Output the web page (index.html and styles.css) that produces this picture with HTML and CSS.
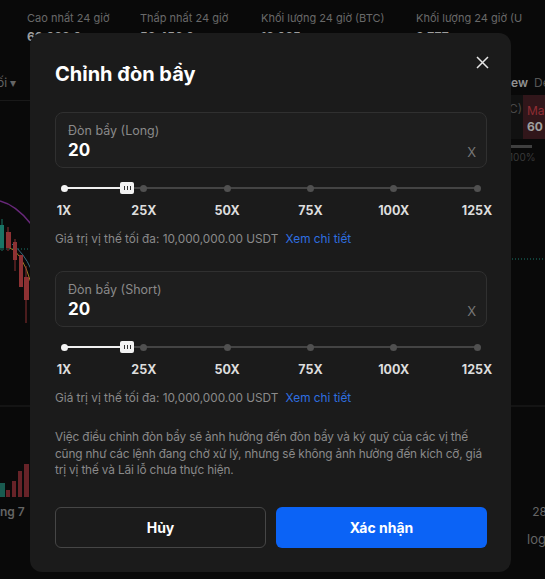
FILE: index.html
```html
<!DOCTYPE html>
<html lang="vi">
<head>
  <meta charset="UTF-8" />
  <meta name="viewport" content="width=device-width, initial-scale=1.0"/>
  <title>Chỉnh đòn bẩy</title>
  <link rel="stylesheet" href="styles.css">
</head>
<body>
  <!-- Trang giao dịch phía sau -->
  <div class="page">
    <div class="stats">
      <div class="stat"><span class="stat-label">Cao nhất 24 giờ</span><span class="stat-value">60,088.0</span></div>
      <div class="stat"><span class="stat-label">Thấp nhất 24 giờ</span><span class="stat-value">58,456.0</span></div>
      <div class="stat"><span class="stat-label">Khối lượng 24 giờ (BTC)</span><span class="stat-value">13,025</span></div>
      <div class="stat"><span class="stat-label">Khối lượng 24 giờ (U</span><span class="stat-value">8,777</span></div>
    </div>

    <div class="toolbar">
      <span class="tool-left">ối &#9662;</span>
      <span class="tool-right">ew <span class="dim">De</span></span>
    </div>

    <div class="chart">
      <svg class="chart-svg" width="545" height="399" viewBox="0 0 545 399">
        <line x1="0" y1="305" x2="545" y2="305" stroke="#262626" />
        <line x1="0" y1="148" x2="32" y2="148" stroke="#1f8f80" stroke-dasharray="1 2" />
        <line x1="500" y1="158" x2="545" y2="158" stroke="#1f8f80" stroke-dasharray="1 2" />
        <path d="M0 100 Q16 104 31 123" stroke="#7a2f8f" stroke-width="1.5" fill="none" />
        <path d="M8 146 Q22 150 31 182" stroke="#b8902a" stroke-width="1" fill="none" />
        <path d="M12 143 Q24 152 31 168" stroke="#3f7f97" stroke-width="1" fill="none" />
        <!-- nến -->
        <line x1="2" y1="118" x2="2" y2="150" stroke="#1e8a78" />
        <rect x="0" y="124" width="4" height="23" fill="#1e8a78" />
        <line x1="8" y1="126" x2="8" y2="150" stroke="#a63a3c" />
        <rect x="6" y="131" width="5" height="16" fill="#a63a3c" />
        <line x1="15" y1="138" x2="15" y2="170" stroke="#a63a3c" />
        <rect x="13" y="141" width="4" height="18" fill="#a63a3c" />
        <rect x="19" y="154" width="4" height="32" fill="#a63a3c" />
        <line x1="26" y1="165" x2="26" y2="222" stroke="#a63a3c" />
        <rect x="24" y="176" width="5" height="23" fill="#a63a3c" />
        <rect x="30" y="186" width="2" height="13" fill="#2a7f8f" />
        <!-- khối lượng -->
        <rect x="0" y="382" width="5" height="14" fill="#1e6b5e" />
        <rect x="6" y="389" width="4" height="7" fill="#7a2a30" />
        <rect x="12" y="380" width="4" height="16" fill="#7a2a30" />
        <rect x="18" y="370" width="4" height="26" fill="#7a2a30" />
        <rect x="24" y="363" width="5" height="33" fill="#7a2a30" />
        <rect x="30" y="370" width="2" height="26" fill="#7a2a30" />
      </svg>

      <div class="quick-trade">
        <div class="qt-row">
          <span class="qt-box">C)</span>
          <span class="qt-sell"><span class="qt-name">Ma</span><span class="qt-price">60</span></span>
        </div>
        <div class="qt-bar"></div>
        <span class="qt-pct">100%</span>
      </div>
    </div>

    <div class="axis">
      <span>ng 7</span>
      <span>28</span>
    </div>
    <div class="axis-bottom">log</div>
  </div>

  <div class="mask"></div>

  <!-- Hộp thoại -->
  <div class="modal">
    <div class="modal-head">
      <h2 class="modal-title">Chỉnh đòn bẩy</h2>
      <button class="close-btn" aria-label="Đóng">
        <svg width="13" height="13" viewBox="0 0 13 13"><path d="M1 1L12 12M12 1L1 12" stroke="#e6e6e6" stroke-width="1.5" fill="none"/></svg>
      </button>
    </div>

    <div class="field">
      <span class="field-label">Đòn bẩy (Long)</span>
      <div class="field-row">
        <span class="field-value">20</span>
        <span class="field-unit">X</span>
      </div>
    </div>

    <div class="slider">
      <div class="track"></div>
      <div class="track-fill" style="width: 15.3%"></div>
      <span class="tick active" style="left: 0%"></span>
      <span class="tick" style="left: 19.35%"></span>
      <span class="tick" style="left: 39.52%"></span>
      <span class="tick" style="left: 59.68%"></span>
      <span class="tick" style="left: 79.84%"></span>
      <span class="tick" style="left: 100%"></span>
      <span class="thumb" style="left: 15.3%"><i></i><i></i><i></i></span>
    </div>
    <div class="marks">
      <span style="left: 0%">1X</span>
      <span style="left: 19.35%">25X</span>
      <span style="left: 39.52%">50X</span>
      <span style="left: 59.68%">75X</span>
      <span style="left: 79.84%">100X</span>
      <span style="left: 100%">125X</span>
    </div>
    <p class="info">Giá trị vị thế tối đa: 10,000,000.00 USDT <a href="#" class="link">Xem chi tiết</a></p>

    <div class="field">
      <span class="field-label">Đòn bẩy (Short)</span>
      <div class="field-row">
        <span class="field-value">20</span>
        <span class="field-unit">X</span>
      </div>
    </div>

    <div class="slider">
      <div class="track"></div>
      <div class="track-fill" style="width: 15.3%"></div>
      <span class="tick active" style="left: 0%"></span>
      <span class="tick" style="left: 19.35%"></span>
      <span class="tick" style="left: 39.52%"></span>
      <span class="tick" style="left: 59.68%"></span>
      <span class="tick" style="left: 79.84%"></span>
      <span class="tick" style="left: 100%"></span>
      <span class="thumb" style="left: 15.3%"><i></i><i></i><i></i></span>
    </div>
    <div class="marks">
      <span style="left: 0%">1X</span>
      <span style="left: 19.35%">25X</span>
      <span style="left: 39.52%">50X</span>
      <span style="left: 59.68%">75X</span>
      <span style="left: 79.84%">100X</span>
      <span style="left: 100%">125X</span>
    </div>
    <p class="info">Giá trị vị thế tối đa: 10,000,000.00 USDT <a href="#" class="link">Xem chi tiết</a></p>

    <p class="note">Việc điều chỉnh đòn bẩy sẽ ảnh hưởng đến đòn bẩy và ký quỹ của các vị thế cũng như các lệnh đang chờ xử lý, nhưng sẽ không ảnh hưởng đến kích cỡ, giá trị vị thế và Lãi lỗ chưa thực hiện.</p>

    <div class="actions">
      <button class="btn btn-cancel">Hủy</button>
      <button class="btn btn-ok">Xác nhận</button>
    </div>
  </div>
</body>
</html>
```

FILE: styles.css
```css
  * {
    box-sizing: border-box;
  }

  body {
    margin: 0;
    width: 545px;
    height: 579px;
    overflow: hidden;
    background-color: #0b0b0b;
    font-family: Inter, "Noto Sans", sans-serif;
    position: relative;
  }

  /* page behind */
  .page {
    width: 545px;
    height: 579px;
    overflow: hidden;
  }

  .stats {
    display: grid;
    grid-template-columns: 113px 121px 155px 140px;
    padding-left: 27px;
    height: 58px;
    padding-top: 11px;
    white-space: nowrap;
  }

  .stat {
    display: flex;
    flex-direction: column;
    gap: 4px;
    overflow: hidden;
  }

  .stat-label {
    font-size: 11px;
    color: #7c7c7c;
  }

  .stat-value {
    font-size: 12px;
    font-weight: 700;
    color: #bbb;
  }

  .toolbar {
    display: flex;
    align-items: center;
    height: 43px;
    padding-top: 6px;
    border-bottom: 1px solid #1e1e1e;
    font-size: 12px;
    color: #777;
    white-space: nowrap;
  }

  .tool-left {
    margin-left: -3px;
  }

  .tool-right {
    margin-left: auto;
    width: 34px;
    overflow: hidden;
    color: #aaa;
    font-weight: 600;
  }

  .tool-right .dim {
    color: #666;
    font-weight: 400;
    margin-left: 3px;
  }

  .chart {
    position: relative;
    height: 399px;
  }

  .chart-svg {
    display: block;
  }

  .quick-trade {
    position: absolute;
    top: -6px;
    left: 509px;
    width: 36px;
    overflow: hidden;
  }

  .qt-row {
    display: flex;
    height: 44px;
  }

  .qt-box {
    width: 14px;
    background: #141414;
    color: #555;
    font-size: 12px;
    padding-top: 6px;
  }

  .qt-sell {
    flex: 1;
    background: #3a1b1f;
    display: flex;
    flex-direction: column;
    padding: 8px 0 0 4px;
    font-size: 12px;
    line-height: 16px;
  }

  .qt-name {
    color: #a8343c;
  }

  .qt-price {
    color: #bbb;
    font-weight: 700;
  }

  .qt-bar {
    width: 21px;
    height: 3px;
    background: #4a4a4a;
    margin-top: 6px;
    margin-left: 2px;
  }

  .qt-pct {
    display: block;
    font-size: 10px;
    color: #444;
    margin-top: 3px;
  }

  .axis {
    display: flex;
    justify-content: space-between;
    height: 24px;
    padding-top: 4px;
    font-size: 12px;
    color: #777;
    margin-right: -2px;
  }

  .axis span:first-child {
    font-weight: 600;
  }

  .axis-bottom {
    text-align: right;
    font-size: 13px;
    color: #777;
    padding-top: 7px;
    margin-right: -1px;
  }

  .mask {
    position: absolute;
    inset: 0;
    background: rgba(0, 0, 0, 0.15);
  }

  /* modal */
  .modal {
    position: absolute;
    left: 30px;
    top: 33px;
    width: 481px;
    height: 539px;
    background-color: #1b1b1b;
    border-radius: 12px;
    padding: 23px 24px 25px 25px;
    color: #fff;
  }

  .modal-head {
    display: flex;
    justify-content: space-between;
    align-items: flex-start;
  }

  .modal-title {
    margin: 4px 0 0;
    font-size: 20px;
    line-height: 28px;
    font-weight: 700;
  }

  .close-btn {
    background: none;
    border: none;
    padding: 0;
    margin-right: -2px;
    width: 13px;
    height: 13px;
    cursor: pointer;
  }

  .close-btn svg {
    display: block;
  }

  .field {
    margin-top: 24px;
    height: 56px;
    border: 1px solid #303030;
    border-radius: 8px;
    background: #1e1e1e;
    padding: 10px 10px 6px 12px;
    display: flex;
    flex-direction: column;
  }

  .field-label {
    font-size: 12.5px;
    line-height: 16px;
    color: #8a8a8a;
  }

  .field-row {
    display: flex;
    justify-content: space-between;
    align-items: center;
    height: 22px;
  }

  .field-value {
    font-size: 17px;
    font-weight: 700;
  }

  .field-unit {
    font-size: 13px;
    color: #777;
    padding-top: 4px;
  }

  .slider {
    position: relative;
    margin: 14px 10px 0 9px;
    height: 12px;
  }

  .track {
    position: absolute;
    left: 0;
    right: 0;
    top: 5px;
    height: 2px;
    background: #444;
  }

  .track-fill {
    position: absolute;
    left: 0;
    top: 5px;
    height: 2px;
    background: #f0f0f0;
  }

  .tick {
    position: absolute;
    top: 2.5px;
    width: 7px;
    height: 7px;
    margin-left: -3.5px;
    border-radius: 50%;
    background: #505050;
  }

  .tick.active {
    background: #f4f4f4;
  }

  .thumb {
    position: absolute;
    top: 0;
    width: 14px;
    height: 12px;
    margin-left: -7px;
    border-radius: 2px;
    background: #f2f2f2;
    display: flex;
    justify-content: center;
    align-items: center;
    gap: 2px;
  }

  .thumb i {
    width: 1px;
    height: 4px;
    background: #333;
  }

  .marks {
    position: relative;
    margin: 9px 10px 0 9px;
    height: 16px;
  }

  .marks span {
    position: absolute;
    top: 0;
    transform: translateX(-50%);
    font-size: 12.5px;
    line-height: 16px;
    font-weight: 700;
    color: #ddd;
  }

  .info {
    margin: 12px 0 0;
    font-size: 11.8px;
    line-height: 16px;
    color: #8a8a8a;
  }

  .link {
    color: #2f6fe0;
    text-decoration: none;
    margin-left: 4px;
  }

  .note {
    margin: 23px 0 0;
    font-size: 11.8px;
    line-height: 16.5px;
    letter-spacing: -0.15px;
    color: #8a8a8a;
  }

  .actions {
    display: grid;
    grid-template-columns: 1fr 1fr;
    gap: 10px;
    margin-top: 28px;
  }

  .btn {
    height: 41px;
    border-radius: 6px;
    font-family: Inter, "Noto Sans", sans-serif;
    font-size: 14px;
    font-weight: 700;
    color: #fff;
    cursor: pointer;
  }

  .btn-cancel {
    background: transparent;
    border: 1px solid #464646;
  }

  .btn-ok {
    background: #0b63f6;
    border: none;
  }
```
